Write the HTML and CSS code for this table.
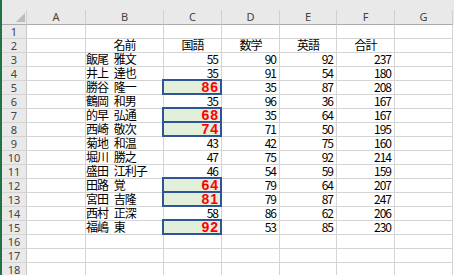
FILE: index.html
```html
<!DOCTYPE html>
<html>
<head>
  <title>成績表 - Sheet1</title>
  <link rel="stylesheet" href="styles.css">
</head>
<body>
  <div class="window">
    <div class="edge"></div>
    <div class="sheet">
      <div class="band"></div>

      <!-- column headers -->
      <div class="row head">
        <div class="corner"><span class="tri"></span></div>
        <div>A</div><div>B</div><div>C</div><div>D</div><div>E</div><div>F</div><div>G</div>
      </div>

      <div class="row"><div class="rh">1</div><div></div><div></div><div></div><div></div><div></div><div></div><div></div></div>
      <div class="row"><div class="rh">2</div><div></div><div class="ttl">名前</div><div class="ttl">国語</div><div class="ttl">数学</div><div class="ttl">英語</div><div class="ttl">合計</div><div></div></div>
      <div class="row"><div class="rh">3</div><div></div><div class="name">飯尾 雅文</div><div class="num">55</div><div class="num">90</div><div class="num">92</div><div class="num">237</div><div></div></div>
      <div class="row"><div class="rh">4</div><div></div><div class="name">井上 達也</div><div class="num">35</div><div class="num">91</div><div class="num">54</div><div class="num">180</div><div></div></div>
      <div class="row"><div class="rh">5</div><div></div><div class="name">勝谷 隆一</div><div class="num mark">86</div><div class="num">35</div><div class="num">87</div><div class="num">208</div><div></div></div>
      <div class="row"><div class="rh">6</div><div></div><div class="name">鶴岡 和男</div><div class="num">35</div><div class="num">96</div><div class="num">36</div><div class="num">167</div><div></div></div>
      <div class="row"><div class="rh">7</div><div></div><div class="name">的早 弘通</div><div class="num mark">68</div><div class="num">35</div><div class="num">64</div><div class="num">167</div><div></div></div>
      <div class="row"><div class="rh">8</div><div></div><div class="name">西崎 敬次</div><div class="num mark">74</div><div class="num">71</div><div class="num">50</div><div class="num">195</div><div></div></div>
      <div class="row"><div class="rh">9</div><div></div><div class="name">菊地 和温</div><div class="num">43</div><div class="num">42</div><div class="num">75</div><div class="num">160</div><div></div></div>
      <div class="row"><div class="rh">10</div><div></div><div class="name">堀川 勝之</div><div class="num">47</div><div class="num">75</div><div class="num">92</div><div class="num">214</div><div></div></div>
      <div class="row"><div class="rh">11</div><div></div><div class="name">盛田 江利子</div><div class="num">46</div><div class="num">54</div><div class="num">59</div><div class="num">159</div><div></div></div>
      <div class="row"><div class="rh">12</div><div></div><div class="name">田路 覚</div><div class="num mark">64</div><div class="num">79</div><div class="num">64</div><div class="num">207</div><div></div></div>
      <div class="row"><div class="rh">13</div><div></div><div class="name">宮田 吉隆</div><div class="num mark">81</div><div class="num">79</div><div class="num">87</div><div class="num">247</div><div></div></div>
      <div class="row"><div class="rh">14</div><div></div><div class="name">西村 正深</div><div class="num">58</div><div class="num">86</div><div class="num">62</div><div class="num">206</div><div></div></div>
      <div class="row"><div class="rh">15</div><div></div><div class="name">福嶋 東</div><div class="num mark">92</div><div class="num">53</div><div class="num">85</div><div class="num">230</div><div></div></div>
      <div class="row"><div class="rh">16</div><div></div><div></div><div></div><div></div><div></div><div></div><div></div></div>
      <div class="row"><div class="rh">17</div><div></div><div></div><div></div><div></div><div></div><div></div><div></div></div>
      <div class="row"><div class="rh">18</div><div></div><div></div><div></div><div></div><div></div><div></div><div></div></div>
    </div>
  </div>
</body>
</html>
```

FILE: styles.css
```css
body { margin: 0; background: #fff; font-family: "Noto Sans CJK JP", sans-serif; font-size: 12px; color: #000; overflow: hidden; }
.window { display: flex; height: 275px; }
.edge { width: 2px; flex: none; background: #217346; }
.sheet { flex: 1; min-width: 0; }
.band { height: 10px; background: #e9e9e9; }

/* every row uses the same column widths */
.row { display: grid; grid-template-columns: 25px 59px 78px 58px 58px 57px 58px 58px; height: 14px; }
.row > div { box-sizing: border-box; border-right: 1px solid #d4d4d4; border-bottom: 1px solid #d4d4d4; line-height: 12px; white-space: nowrap; overflow: visible; }

.head { height: 15px; background: #e9e9e9; }
.head > div { border-bottom-color: #ababab; border-right-color: #d0d0d0; text-align: center; font-family: "Noto Sans", sans-serif; font-size: 11px; line-height: 14px; color: #444; }
.corner { display: flex; justify-content: flex-end; align-items: flex-end; padding: 0 1px 2px 0; }
.tri { width: 0; height: 0; border-left: 9px solid transparent; border-bottom: 9px solid #bcbcbc; }

.rh { background: #e9e9e9; text-align: center; font-family: "Noto Sans", sans-serif; font-size: 11px; line-height: 13px !important; color: #444; border-right-color: #c8c8c8 !important; }

.ttl { text-align: center; letter-spacing: -1px; }
.name { padding-left: 0; letter-spacing: -1px; word-spacing: 4px; }
.num { text-align: right; padding-right: 3px; letter-spacing: -1px; }

/* highlighted score cells */
.mark { position: relative; background: #e2efda; color: #ff0000; font-family: "Liberation Sans", Arial, sans-serif; font-weight: bold; font-size: 14px; line-height: 13px !important; letter-spacing: 1px; padding-right: 2px; }
.mark::after { content: ""; position: absolute; left: -2px; top: -2px; right: -1px; bottom: -1px; border: 2px solid #2f5597; }
```
